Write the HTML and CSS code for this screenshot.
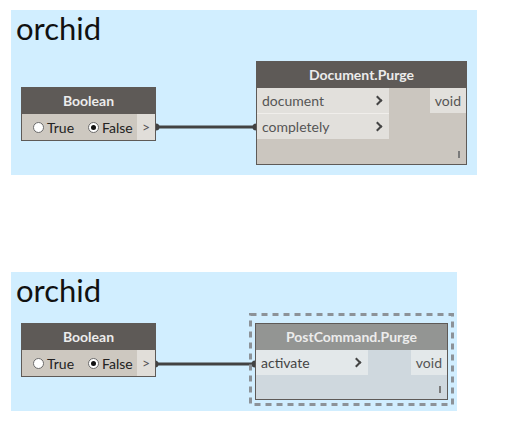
FILE: index.html
```html
<!DOCTYPE html>
<html>
<head>
<meta charset="utf-8">
<link rel="stylesheet" href="styles.css">
</head>
<body>
<div class="canvas">
  <section class="group g1">
    <h1 class="group-title">orchid</h1>
    <svg class="wires" width="466" height="165" viewBox="0 0 466 165">
      <line x1="145" y1="117" x2="245" y2="117" stroke="#424242" stroke-width="3"/>
      <path d="M145 113.5 A3.5 3.5 0 0 1 145 120.5 Z" fill="#424242"/>
      <path d="M245 113.5 A3.5 3.5 0 0 0 245 120.5 Z" fill="#424242"/>
    </svg>
    <div class="node bool b1">
      <div class="node-head">Boolean</div>
      <div class="bool-body">
        <div class="radios">
          <span class="radio"><span class="dot"></span>True</span>
          <span class="radio on"><span class="dot"></span>False</span>
        </div>
        <div class="out-port">&gt;</div>
      </div>
    </div>
    <div class="node func purge">
      <div class="node-head">Document.Purge</div>
      <div class="func-body">
        <div class="inputs">
          <div class="in-port"><span>document</span><span class="chev"></span></div>
          <div class="in-port"><span>completely</span><span class="chev"></span></div>
        </div>
        <div class="outputs">
          <div class="out-name">void</div>
        </div>
      </div>
      <div class="lacing"></div>
    </div>
  </section>

  <section class="group g2">
    <h1 class="group-title">orchid</h1>
    <svg class="wires" width="446" height="139" viewBox="0 0 446 139">
      <line x1="144" y1="92" x2="244" y2="92" stroke="#424242" stroke-width="3"/>
      <path d="M144 88.5 A3.5 3.5 0 0 1 144 95.5 Z" fill="#424242"/>
      <path d="M244 88.5 A3.5 3.5 0 0 0 244 95.5 Z" fill="#424242"/>
    </svg>
    <div class="node bool b2">
      <div class="node-head">Boolean</div>
      <div class="bool-body">
        <div class="radios">
          <span class="radio"><span class="dot"></span>True</span>
          <span class="radio on"><span class="dot"></span>False</span>
        </div>
        <div class="out-port">&gt;</div>
      </div>
    </div>
    <svg class="selection" width="205" height="93" viewBox="0 0 205 93">
      <rect x="1.5" y="1.5" width="202" height="90" fill="none" stroke="#8c9298" stroke-width="3" stroke-dasharray="6 5"/>
    </svg>
    <div class="node func post">
      <div class="node-head">PostCommand.Purge</div>
      <div class="func-body">
        <div class="inputs">
          <div class="in-port"><span>activate</span><span class="chev"></span></div>
        </div>
        <div class="outputs">
          <div class="out-name">void</div>
        </div>
      </div>
      <div class="lacing"></div>
    </div>
  </section>
</div>
</body>
</html>
```

FILE: styles.css
```css
html, body {
  margin: 0;
  padding: 0;
  background: #ffffff;
}

.canvas {
  display: flex;
  flex-direction: column;
  align-items: flex-start;
  padding: 10px 0 0 11px;
}

.group {
  position: relative;
  background: #d1eeff;
}

.g1 {
  width: 466px;
  height: 165px;
}

.g2 {
  width: 446px;
  height: 139px;
  margin-top: 97px;
}

.group-title {
  margin: 0;
  padding: 0 0 0 5px;
  font-family: Lato, "Open Sans", sans-serif;
  font-weight: 400;
  font-size: 31px;
  line-height: 36px;
  color: #111;
}

.wires {
  position: absolute;
  left: 0;
  top: 0;
}

.node {
  position: absolute;
  box-sizing: border-box;
  border: 1px solid #5e5a57;
  font-family: Lato, "Open Sans", sans-serif;
}

.node-head {
  height: 26px;
  background: #5e5a57;
  color: #ececec;
  font-weight: 700;
  font-size: 14px;
  line-height: 26px;
  text-align: center;
}

/* Boolean node */
.bool {
  width: 135px;
  height: 54px;
}

.b1 { left: 10px; top: 77px; }
.b2 { left: 10px; top: 51px; }

.bool-body {
  display: flex;
  height: 26px;
  background: #cdc8c0;
}

.radios {
  flex: 1;
  display: flex;
  align-items: center;
  gap: 14px;
  padding-left: 11px;
  font-size: 14px;
  color: #222;
}

.radio {
  display: flex;
  align-items: center;
}

.dot {
  box-sizing: border-box;
  width: 11px;
  height: 11px;
  margin-right: 3px;
  border-radius: 50%;
  border: 1px solid #6b6b6b;
  background: #fff;
  position: relative;
}

.radio.on .dot::after {
  content: "";
  position: absolute;
  left: 2px;
  top: 2px;
  width: 5px;
  height: 5px;
  border-radius: 50%;
  background: #111;
}

.out-port {
  width: 18px;
  background: #e1ded9;
  color: #555;
  font-size: 14px;
  line-height: 26px;
  text-align: center;
}

/* function nodes */
.func {
  display: flex;
  flex-direction: column;
}

.purge {
  left: 245px;
  top: 51px;
  width: 211px;
  height: 104px;
  background: #cbc6bf;
}

.post {
  left: 244px;
  top: 51px;
  width: 193px;
  height: 77px;
  background: #cfd8de;
  border-color: #5e5a57;
}

.post .node-head {
  background: #939593;
}

.func-body {
  display: flex;
  justify-content: space-between;
}

.inputs {
  display: flex;
  flex-direction: column;
  gap: 1px;
}

.purge .inputs { width: 132px; }
.post .inputs { width: 112px; }

.in-port {
  height: 25px;
  display: flex;
  align-items: center;
  justify-content: space-between;
  padding: 0 6px 0 5px;
  background: #e2e0dc;
  color: #555;
  font-size: 14px;
}

.purge .inputs .in-port:first-child {
  border-bottom: 1px solid #f0eeeb;
  margin-bottom: -1px;
}

.post .in-port {
  background: #e3e8ea;
  color: #444;
}

.chev {
  width: 5px;
  height: 5px;
  border-right: 2px solid #444;
  border-bottom: 2px solid #444;
  transform: rotate(-45deg);
  margin-right: 2px;
}

.out-name {
  height: 25px;
  padding: 0 5px;
  background: #e2e0dc;
  color: #555;
  font-size: 14px;
  line-height: 25px;
}

.post .out-name {
  background: #e3e8ea;
}

.lacing {
  margin-top: auto;
  align-self: flex-end;
  width: 2px;
  height: 7px;
  margin-right: 6px;
  margin-bottom: 6px;
  background: #7a7a7a;
}

.selection {
  position: absolute;
  left: 238px;
  top: 41px;
}
```
